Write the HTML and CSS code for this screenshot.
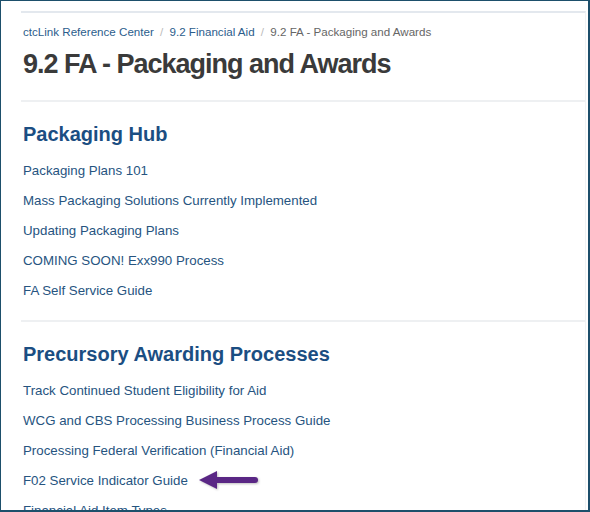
FILE: index.html
```html
<!DOCTYPE html>
<html lang="en">
<head>
  <meta charset="UTF-8">
  <meta name="viewport" content="width=device-width, initial-scale=1.0">
  <title>9.2 FA - Packaging and Awards</title>
  <link rel="stylesheet" href="styles.css">
</head>
<body>
  <div class="frame">
    <main class="page">
      <nav class="crumbs">
        <a href="#">ctcLink Reference Center</a>
        <span class="sep">/</span>
        <a href="#">9.2 Financial Aid</a>
        <span class="sep">/</span>
        <span class="current">9.2 FA - Packaging and Awards</span>
      </nav>
      <h1>9.2 FA - Packaging and Awards</h1>

      <section class="group">
        <h2>Packaging Hub</h2>
        <ul class="links">
          <li><a href="#">Packaging Plans 101</a></li>
          <li><a href="#">Mass Packaging Solutions Currently Implemented</a></li>
          <li><a href="#">Updating Packaging Plans</a></li>
          <li><a href="#">COMING SOON! Exx990 Process</a></li>
          <li><a href="#">FA Self Service Guide</a></li>
        </ul>
      </section>

      <section class="group">
        <h2>Precursory Awarding Processes</h2>
        <ul class="links">
          <li><a href="#">Track Continued Student Eligibility for Aid</a></li>
          <li><a href="#">WCG and CBS Processing Business Process Guide</a></li>
          <li><a href="#">Processing Federal Verification (Financial Aid)</a></li>
          <li class="marked">
            <a href="#">F02 Service Indicator Guide</a>
            <svg class="arrow" width="64" height="24" viewBox="0 0 64 24">
              <path d="M18 12 H58" stroke="#5a2785" stroke-width="6" stroke-linecap="round"/>
              <path d="M2 12 L20 3 L20 21 Z" fill="#5a2785"/>
            </svg>
          </li>
          <li><a href="#">Financial Aid Item Types</a></li>
        </ul>
      </section>
    </main>
  </div>
</body>
</html>
```

FILE: styles.css
```css
html, body {
  margin: 0;
  padding: 0;
  height: 100%;
  overflow: hidden;
}
body {
  font-family: "Liberation Sans", Arial, sans-serif;
  background: #fff;
}
.frame {
  box-sizing: border-box;
  width: 590px;
  height: 512px;
  border: 1px solid #1d4f6b;
  border-bottom-width: 2px;
  border-right-width: 2px;
  overflow: hidden;
  padding: 10px 2px 0 20px;
}
.page {
  border-top: 2px solid #e3e8ee;
  border-right: 1px solid #f0f2f4;
  height: 600px;
}
.crumbs {
  font-size: 11.6px;
  padding: 12px 0 0 2px;
  color: #666;
}
.crumbs a {
  color: #2b5d8c;
  text-decoration: none;
}
.crumbs .sep {
  color: #bbb;
  margin: 0 3px;
}
h1 {
  margin: 11px 0 0 2px;
  font-size: 27px;
  line-height: 31px;
  font-weight: bold;
  color: #3a3a3a;
  letter-spacing: -1px;
  padding-bottom: 20px;
}
.group {
  border-top: 2px solid #eef0f2;
  padding: 19px 0 7px 2px;
}
h2 {
  margin: 0;
  font-size: 20px;
  color: #1b4e82;
  line-height: 26px;
}
.links {
  list-style: none;
  margin: 16px 0 0;
  padding: 0;
}
.links li {
  height: 30px;
  line-height: 16px;
  font-size: 13.3px;
  display: flex;
  align-items: flex-start;
}
.links a {
  color: #26547f;
  text-decoration: none;
}
.arrow {
  margin: -5px 0 0 9px;
  filter: drop-shadow(1px 1px 1px rgba(0,0,0,0.25));
}
```
